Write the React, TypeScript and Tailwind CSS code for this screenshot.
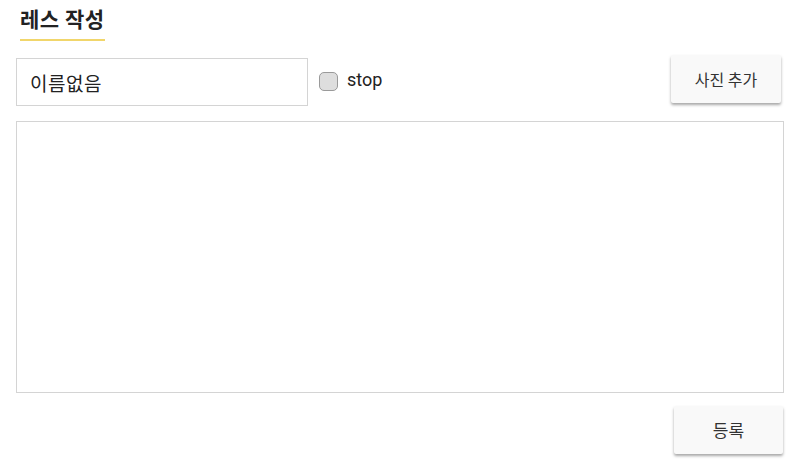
import React from 'react'

const App = () => {
    return (
        <div className="w-[800px] h-[465px] bg-white px-4 pt-[4px] font-['Roboto','Noto_Sans_CJK_KR',sans-serif] text-[#222]">
            <div className="flex">
                <h2 className="ml-1 pb-[6px] border-b-2 border-[#f1d66b] text-[21px] leading-[29px] font-bold tracking-[0.5px] text-[#222] font-['Noto_Sans_CJK_KR',sans-serif]">
                    레스 작성
                </h2>
            </div>

            <div className="flex items-center mt-[14px] h-[48px]">
                <input
                    defaultValue="이름없음"
                    className="w-[292px] h-[48px] mt-[6px] border border-[#d4d4d4] px-[13px] text-[19px] tracking-[0.5px] text-[#222] outline-none font-['Noto_Sans_CJK_KR',sans-serif]"
                />
                <label className="flex items-center ml-[11px] mt-[5px]">
                    <span className="w-[19px] h-[19px] rounded-[5px] border border-[#9a9a9a] bg-[#dedede]" />
                    <span className="ml-[9px] text-[18px] leading-[24px] text-[#222] font-['Roboto',sans-serif] -mt-[4px]">stop</span>
                </label>
                <button className="ml-auto mr-[3px] w-[110px] h-[48px] bg-[#f9f9f9] rounded-[2px] shadow-[0_2px_3px_rgba(0,0,0,0.35)] text-[16px] text-[#333] font-['Noto_Sans_CJK_KR',sans-serif]">
                    사진 추가
                </button>
            </div>

            <textarea className="block mt-[18px] w-[768px] h-[272px] border border-[#d4d4d4] resize-none outline-none" />

            <div className="flex justify-end mt-[13px]">
                <button className="mr-[1px] w-[109px] h-[48px] bg-[#f9f9f9] rounded-[2px] shadow-[0_2px_3px_rgba(0,0,0,0.35)] text-[17px] text-[#333] font-['Noto_Sans_CJK_KR',sans-serif]">
                    등록
                </button>
            </div>
        </div>
    )
}

export default App
